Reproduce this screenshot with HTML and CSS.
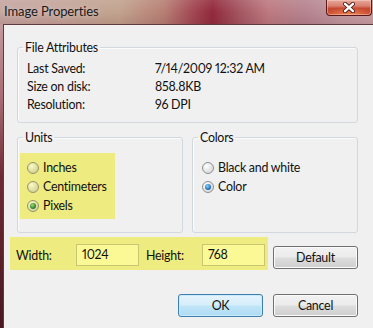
FILE: index.html
```html
<!DOCTYPE html>
<html>
<head>
<meta charset="utf-8">
<link rel="stylesheet" href="styles.css">
</head>
<body>
<div class="window">
  <div class="titlebar">
    <span class="title">Image Properties</span>
    <span class="close">
      <svg width="14" height="11" viewBox="0 0 14 11">
        <path d="M3 1.8 L11 9.2 M11 1.8 L3 9.2" stroke="#4a1414" stroke-width="4" stroke-linecap="round"/>
        <path d="M3 1.8 L11 9.2 M11 1.8 L3 9.2" stroke="#ffffff" stroke-width="2.4" stroke-linecap="round"/>
      </svg>
    </span>
  </div>
  <div class="frame">
    <div class="client">
      <fieldset class="group attrs">
        <legend>File Attributes</legend>
        <div class="row"><span class="key">Last Saved:</span><span>7/14/2009 12:32 AM</span></div>
        <div class="row"><span class="key">Size on disk:</span><span>858.8KB</span></div>
        <div class="row"><span class="key">Resolution:</span><span>96 DPI</span></div>
      </fieldset>
      <div class="groups">
        <fieldset class="group half">
          <legend>Units</legend>
          <div class="hl">
            <div class="radio"><span class="dot hl-dot"></span>Inches</div>
            <div class="radio"><span class="dot hl-dot"></span>Centimeters</div>
            <div class="radio"><span class="dot hl-dot on-green"></span>Pixels</div>
          </div>
        </fieldset>
        <fieldset class="group half">
          <legend>Colors</legend>
          <div class="plain">
            <div class="radio"><span class="dot"></span>Black and white</div>
            <div class="radio"><span class="dot on-blue"></span>Color</div>
          </div>
        </fieldset>
      </div>
      <div class="sizerow">
        <div class="hlbar">
          <span class="lbl-w">Width:</span>
          <span class="input">1024</span>
          <span class="lbl-h">Height:</span>
          <span class="input">768</span>
        </div>
        <button class="btn default">Default</button>
      </div>
      <div class="actions">
        <button class="btn primary">OK</button>
        <button class="btn">Cancel</button>
      </div>
    </div>
  </div>
</div>
</body>
</html>
```
FILE: styles.css
```css
html, body {
  margin: 0;
  padding: 0;
  width: 373px;
  height: 328px;
  overflow: hidden;
}
body {
  font-family: Lato, "Noto Sans", sans-serif;
  font-size: 12.4px;
  letter-spacing: -0.25px;
  font-variant-numeric: proportional-nums;
  color: #111111;
}
.window {
  display: flex;
  flex-direction: column;
  height: 328px;
}
.titlebar {
  flex: none;
  height: 24px;
  display: flex;
  align-items: flex-start;
  background:
    linear-gradient(180deg, rgba(255,255,255,0.10) 0%, rgba(255,255,255,0) 50%, rgba(90,30,40,0.12) 100%),
    linear-gradient(90deg, #c6a6a0 0%, #c4a499 18%, #c2a38e 32%, #b77f74 44%, #a24652 52%, #922a3c 57%, #a45560 64%, #bd7a80 72%, #b58490 82%, #c39aa0 92%, #c8a0a4 100%);
}
.title {
  padding: 4px 0 0 4px;
  font-size: 13px;
  letter-spacing: -0.1px;
  line-height: 15px;
  color: #1a1a1a;
  text-shadow: 0 0 6px rgba(255,255,255,0.55);
}
.close {
  margin-left: auto;
  margin-right: 1px;
  width: 44px;
  height: 15px;
  border: 1px solid #5a1818;
  border-top: none;
  border-radius: 0 0 4px 4px;
  display: flex;
  align-items: center;
  justify-content: center;
  background:
    radial-gradient(ellipse 60% 50% at 50% 100%, rgba(255,150,90,0.8), rgba(255,150,90,0) 100%),
    linear-gradient(180deg, #e6a89a 0%, #d98070 40%, #c64a32 55%, #c0442c 100%);
  box-shadow: inset 0 0 0 1px rgba(255,220,210,0.45);
}
.close svg {
  display: block;
}
.frame {
  flex: 1;
  display: flex;
  padding-left: 3px;
  background: linear-gradient(180deg, #c49a9c 0%, #a86a72 25%, #6e2a34 50%, #4a1820 100%);
}
.client {
  flex: 1;
  background: #f0f0f0;
  border-left: 1px solid #5e3a3e;
  border-top: 1px solid #5e3a3e;
  padding: 15px 15px 0 6px;
  display: flex;
  flex-direction: column;
}
fieldset.group {
  margin: 0;
  padding: 0;
  min-width: 0;
  border: 1px solid #d2d8dd;
  border-radius: 3px;
  box-shadow: inset 1px 1px 0 #fbfbfb;
}
fieldset.group legend {
  padding: 0 2px;
  margin-left: 5px;
  line-height: 15px;
}
.attrs {
  margin-left: 7px !important;
  padding: 4px 0 9px 0 !important;
}
.row {
  display: flex;
  height: 18px;
  align-items: center;
  padding-left: 9px;
}
.key {
  width: 128px;
}
.groups {
  display: flex;
  gap: 9px;
  margin: 7px 0 0 7px;
}
.half {
  flex: 1;
  padding: 8px 0 13px 0 !important;
}
.hl {
  margin-left: 2px;
  width: 88px;
  padding: 5px 0 4px 7px;
  background: #eeec80;
}
.plain {
  margin-left: 9px;
  padding-top: 5px;
}
.radio {
  display: flex;
  align-items: center;
  height: 19px;
  gap: 4px;
}
.dot {
  box-sizing: border-box;
  width: 12px;
  height: 12px;
  border-radius: 50%;
  border: 1px solid #8b8f93;
  background: radial-gradient(circle at 35% 30%, #ffffff 0%, #e9e9e9 45%, #cfd1d3 100%);
  position: relative;
}
.hl-dot {
  border-color: #96946a;
  background: radial-gradient(circle at 35% 30%, #fbfbc8 0%, #e4e2a6 45%, #cbc98e 100%);
}
.on-green::after,
.on-blue::after {
  content: "";
  position: absolute;
  left: 2px;
  top: 2px;
  width: 6px;
  height: 6px;
  border-radius: 50%;
}
.on-green::after {
  background: radial-gradient(circle at 40% 35%, #9ee070 0%, #3c8a3a 55%, #17502a 100%);
}
.on-blue::after {
  background: radial-gradient(circle at 40% 35%, #8ed4f6 0%, #2b7cc0 55%, #0c3e78 100%);
}
.sizerow {
  display: flex;
  margin-top: 4px;
  align-items: flex-start;
}
.hlbar {
  width: 249px;
  height: 22px;
  padding: 7px 3px 4px 6px;
  background: #eeec80;
  display: flex;
  align-items: center;
}
.lbl-w {
  width: 60px;
}
.lbl-h {
  width: 56px;
  margin-left: 7px;
}
.input {
  box-sizing: border-box;
  width: 63px;
  height: 22px;
  border: 1px solid #c9c672;
  background: #fbf996;
  padding-left: 5px;
  line-height: 20px;
}
.btn {
  box-sizing: border-box;
  width: 85px;
  height: 23px;
  padding: 0;
  font-family: Lato, "Noto Sans", sans-serif;
  font-size: 12.4px;
  letter-spacing: -0.25px;
  color: #111111;
  border: 1px solid #707070;
  border-radius: 3px;
  background: linear-gradient(180deg, #f2f2f2 0%, #ebebeb 48%, #dddddd 52%, #cfcfcf 100%);
  box-shadow: inset 0 0 0 1px #fbfbfb;
}
.default {
  margin: 9px 0 0 5px;
}
.actions {
  display: flex;
  justify-content: flex-end;
  gap: 10px;
  margin-top: 24px;
}
.primary {
  border-color: #3c7fb1;
  background: linear-gradient(180deg, #e5f4fc 0%, #d6eefb 48%, #c1e5f9 52%, #aedbf3 100%);
  box-shadow: inset 0 0 0 1px #cdeafa;
}
```
